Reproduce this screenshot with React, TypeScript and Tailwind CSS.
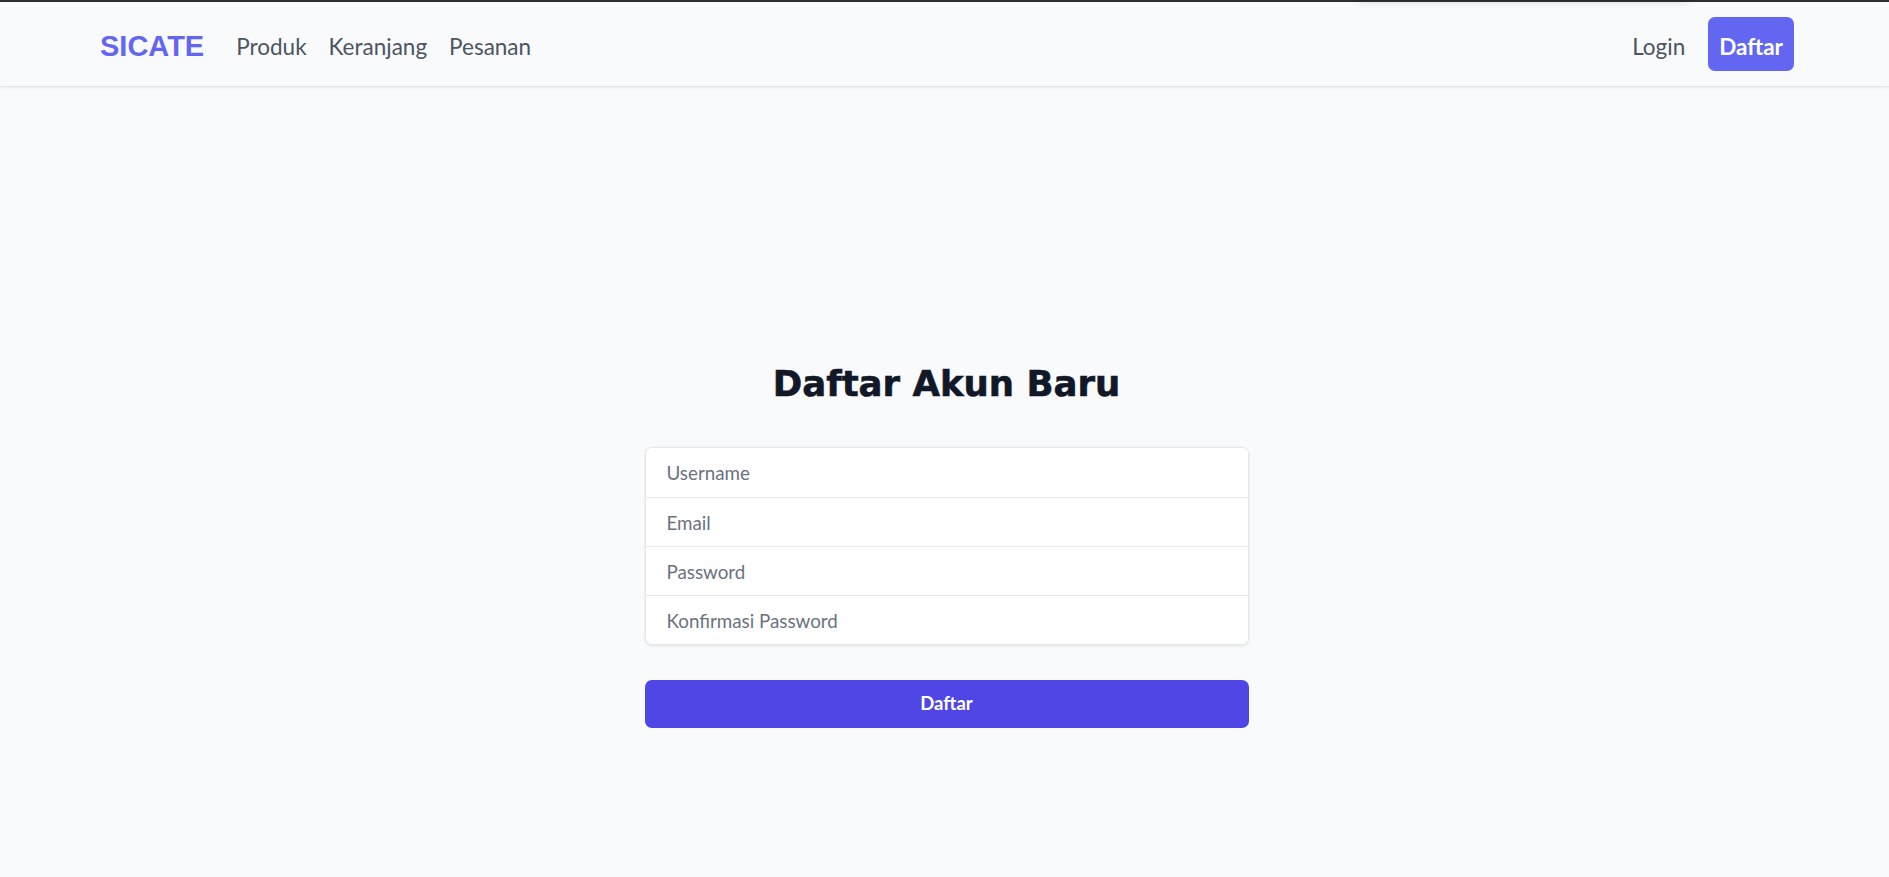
import React from "react";

const body = { fontFamily: "Lato, 'Liberation Sans', sans-serif" };

export default function App() {
  return (
    <div className="min-h-screen bg-[#f9fafb] relative overflow-hidden" style={body}>
      <div className="h-[2px] bg-[#2f2f2f]" />
      <div className="absolute top-[-40px] left-[1355px] w-[335px] h-[40px] bg-[#f9fafb] shadow-[0_2px_8px_rgba(0,0,0,0.12)] rounded-md" />
      <nav className="h-[85px] flex items-center justify-between pl-[100px] pr-[95px] border-b border-[#e5e7eb] shadow-[0_1px_3px_rgba(0,0,0,0.06)] bg-[#f9fafb]">
        <div className="flex items-center">
          <span className="text-[29px] font-bold text-[#6366f1] leading-none pt-[4px]" style={{ fontFamily: "'Liberation Sans', sans-serif" }}>SICATE</span>
          <div className="flex items-center gap-[22px] ml-[32px] text-[22.5px] text-[#4b5563] pt-[5px]">
            <a>Produk</a>
            <a>Keranjang</a>
            <a>Pesanan</a>
          </div>
        </div>
        <div className="flex items-center gap-[23px] text-[22.5px]">
          <a className="text-[#4b5563] pt-[5px]">Login</a>
          <a className="h-[54px] px-[11px] pt-[5px] flex items-center rounded-[7px] bg-[#6366f1] text-white font-bold">Daftar</a>
        </div>
      </nav>
      <main className="pt-[274px] pl-[4px] flex flex-col items-center">
        <h1
          className="text-[35.5px] leading-[45px] font-bold text-[#111827] mb-[41px] [-webkit-text-stroke:0.6px_#111827]"
          style={{ fontFamily: "'DejaVu Sans', sans-serif" }}
        >
          Daftar Akun Baru
        </h1>
        <div className="w-[604px]">
          <div className="bg-white border border-[#e5e7eb] rounded-[7px] shadow-[0_1px_3px_rgba(0,0,0,0.1)] overflow-hidden">
            {["Username", "Email", "Password", "Konfirmasi Password"].map((p, i) => (
              <input
                key={p}
                placeholder={p}
                type={i >= 2 ? "password" : i === 1 ? "email" : "text"}
                className={`block w-full h-[49px] px-[21px] text-[18.8px] text-[#111827] placeholder:text-[#6b7280] outline-none bg-white ${i > 0 ? "border-t border-[#e5e7eb]" : ""}`}
              />
            ))}
          </div>
          <button className="mt-[35px] w-full h-[48px] rounded-[7px] bg-[#4f46e5] text-white text-[18.5px] font-bold">
            Daftar
          </button>
        </div>
      </main>
    </div>
  );
}
